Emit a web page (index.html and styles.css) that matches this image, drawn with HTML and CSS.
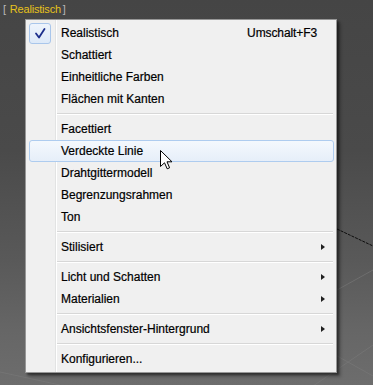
FILE: index.html
```
<!DOCTYPE html>
<html lang="de">
<head>
<meta charset="utf-8">
<title>Viewport-Menü</title>
<link rel="stylesheet" href="styles.css">
</head>
<body>
<div class="viewport">
  <svg class="grid" width="373" height="385" viewBox="0 0 373 385" aria-hidden="true">
    <line x1="337" y1="229" x2="373" y2="246" class="axis"/>
    <line x1="300" y1="395" x2="373" y2="345" class="gridline"/>
    <line x1="330" y1="352" x2="373" y2="376" class="gridline"/>
    <line x1="0" y1="372" x2="60" y2="385" class="gridline"/>
    <line x1="337" y1="290" x2="373" y2="270" class="gridline"/>
  </svg>
  <div class="label"><span class="br">[</span><span class="name">Realistisch</span><span class="br">]</span></div>

  <div class="menu">
    <div class="item checked"><span class="check"><svg width="22" height="21" viewBox="0 0 22 21"><path d="M7 10.5 L10 14.5 L15.5 6" fill="none" stroke="#1c2e8c" stroke-width="1.8" stroke-linecap="round" stroke-linejoin="round"/></svg></span><span class="text">Realistisch</span><span class="key">Umschalt+F3</span></div>
    <div class="item"><span class="check"></span><span class="text">Schattiert</span></div>
    <div class="item"><span class="check"></span><span class="text">Einheitliche Farben</span></div>
    <div class="item"><span class="check"></span><span class="text">Flächen mit Kanten</span></div>
    <div class="sep"></div>
    <div class="item"><span class="check"></span><span class="text">Facettiert</span></div>
    <div class="item hover"><span class="check"></span><span class="text">Verdeckte Linie</span></div>
    <div class="item"><span class="check"></span><span class="text">Drahtgittermodell</span></div>
    <div class="item"><span class="check"></span><span class="text">Begrenzungsrahmen</span></div>
    <div class="item"><span class="check"></span><span class="text">Ton</span></div>
    <div class="sep"></div>
    <div class="item"><span class="check"></span><span class="text">Stilisiert</span><span class="arrow"></span></div>
    <div class="sep"></div>
    <div class="item"><span class="check"></span><span class="text">Licht und Schatten</span><span class="arrow"></span></div>
    <div class="item"><span class="check"></span><span class="text">Materialien</span><span class="arrow"></span></div>
    <div class="sep"></div>
    <div class="item"><span class="check"></span><span class="text">Ansichtsfenster-Hintergrund</span><span class="arrow"></span></div>
    <div class="sep"></div>
    <div class="item"><span class="check"></span><span class="text">Konfigurieren...</span></div>
  </div>

  <svg class="cursor" width="13" height="20" viewBox="0 0 13 20" aria-hidden="true">
    <path d="M0.5 0.5 L0.5 16.5 L4.5 12.8 L7.2 18.8 L9.6 17.8 L7 11.8 L12 11.8 Z" fill="#fff" stroke="#000" stroke-width="1" stroke-linejoin="miter"/>
  </svg>
</div>
</body>
</html>
```

FILE: styles.css
```
html, body {
  margin: 0;
  padding: 0;
}

body {
  width: 373px;
  height: 385px;
  overflow: hidden;
  font-family: "Liberation Sans", Arial, sans-serif;
}

.viewport {
  position: relative;
  width: 373px;
  height: 385px;
  background: linear-gradient(to bottom, #454545 0px, #4a4a4a 150px, #595959 260px, #666666 330px, #6d6d6d 385px);
}

.grid {
  position: absolute;
  left: 0;
  top: 0;
}

.grid .axis {
  stroke: #0d0d0d;
  stroke-width: 1;
  stroke-dasharray: 3 1;
}

.grid .gridline {
  stroke: #7a7a7a;
  stroke-width: 1;
  opacity: 0.6;
}

.label {
  position: relative;
  display: flex;
  padding: 2px 0 0 3px;
  font-size: 11px;
  line-height: 14px;
  letter-spacing: -0.2px;
}

.label .br {
  color: #b8b8b8;
}

.label .name {
  color: #e6c21b;
  margin: 0 2px 0 4px;
}

.menu {
  position: absolute;
  left: 25px;
  top: 19px;
  width: 310px;
  padding: 2px 0;
  border: 1px solid #979797;
  background:
    linear-gradient(to right, transparent 29px, #e2e3e3 29px, #e2e3e3 30px, #ffffff 30px, #ffffff 31px, transparent 31px),
    #f0f0f0;
  box-shadow: 2px 2px 2px rgba(0, 0, 0, 0.45), 4px 4px 3px rgba(0, 0, 0, 0.2);
  font-size: 12px;
  color: #000;
  -webkit-text-stroke: 0.2px #000;
}

.item {
  display: flex;
  align-items: center;
  height: 22px;
  margin: 0 2px 0 3px;
  box-sizing: border-box;
  border: 1px solid transparent;
  border-radius: 3px;
  line-height: 20px;
}

.item.hover {
  border-color: #aeccef;
  background: linear-gradient(to bottom, #f4f8fd, #e6eef9);
}

.check {
  flex: 0 0 22px;
  height: 21px;
  margin-left: -1px;
  box-sizing: border-box;
  border-radius: 3px;
}

.checked .check {
  border: 1px solid #a9c6eb;
  background: linear-gradient(to bottom, #eef4fc, #dde9f8);
}

.checked .check svg {
  display: block;
  margin: -1px;
}

.text {
  flex: 1 1 auto;
  margin-left: 10px;
  white-space: nowrap;
}

.key {
  margin-right: 16px;
  letter-spacing: -0.1px;
}

.arrow {
  width: 0;
  height: 0;
  margin-right: 8px;
  border-top: 3.5px solid transparent;
  border-bottom: 3.5px solid transparent;
  border-left: 4px solid #202020;
}

.sep {
  height: 8px;
  margin: 0 3px 0 31px;
  background: linear-gradient(to bottom, transparent 3px, #d7d7d7 3px, #d7d7d7 4px, #ffffff 4px, #ffffff 5px, transparent 5px);
}

.cursor {
  position: absolute;
  left: 160px;
  top: 150px;
}
```
